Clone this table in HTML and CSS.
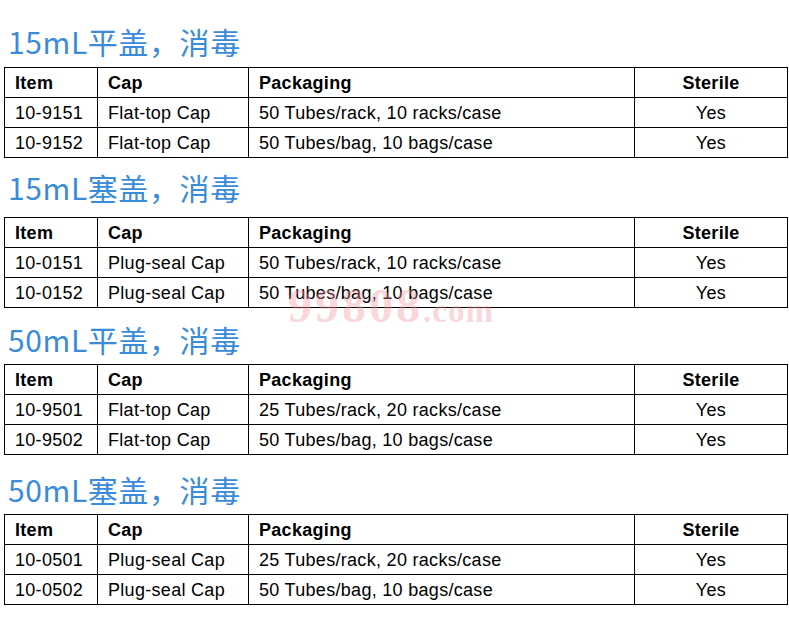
FILE: index.html
```html
<!DOCTYPE html>
<html lang="zh">
<head>
<meta charset="utf-8">
<title>Tubes</title>
<link rel="stylesheet" href="styles.css">
</head>
<body>
<div class="page">
  <section class="sec sec1">
    <h2 class="title">15mL平盖，消毒</h2>
    <table class="spec">
      <colgroup><col class="c1"><col class="c2"><col class="c3"><col class="c4"></colgroup>
      <tr class="head"><th>Item</th><th>Cap</th><th>Packaging</th><th class="ctr">Sterile</th></tr>
      <tr><td>10-9151</td><td>Flat-top Cap</td><td>50 Tubes/rack, 10 racks/case</td><td class="ctr">Yes</td></tr>
      <tr><td>10-9152</td><td>Flat-top Cap</td><td>50 Tubes/bag, 10 bags/case</td><td class="ctr">Yes</td></tr>
    </table>
  </section>
  <section class="sec sec2">
    <h2 class="title">15mL塞盖，消毒</h2>
    <table class="spec">
      <colgroup><col class="c1"><col class="c2"><col class="c3"><col class="c4"></colgroup>
      <tr class="head"><th>Item</th><th>Cap</th><th>Packaging</th><th class="ctr">Sterile</th></tr>
      <tr><td>10-0151</td><td>Plug-seal Cap</td><td>50 Tubes/rack, 10 racks/case</td><td class="ctr">Yes</td></tr>
      <tr><td>10-0152</td><td>Plug-seal Cap</td><td>50 Tubes/bag, 10 bags/case</td><td class="ctr">Yes</td></tr>
    </table>
  </section>
  <section class="sec sec3">
    <h2 class="title">50mL平盖，消毒</h2>
    <table class="spec">
      <colgroup><col class="c1"><col class="c2"><col class="c3"><col class="c4"></colgroup>
      <tr class="head"><th>Item</th><th>Cap</th><th>Packaging</th><th class="ctr">Sterile</th></tr>
      <tr><td>10-9501</td><td>Flat-top Cap</td><td>25 Tubes/rack, 20 racks/case</td><td class="ctr">Yes</td></tr>
      <tr><td>10-9502</td><td>Flat-top Cap</td><td>50 Tubes/bag, 10 bags/case</td><td class="ctr">Yes</td></tr>
    </table>
  </section>
  <section class="sec sec4">
    <h2 class="title">50mL塞盖，消毒</h2>
    <table class="spec">
      <colgroup><col class="c1"><col class="c2"><col class="c3"><col class="c4"></colgroup>
      <tr class="head"><th>Item</th><th>Cap</th><th>Packaging</th><th class="ctr">Sterile</th></tr>
      <tr><td>10-0501</td><td>Plug-seal Cap</td><td>25 Tubes/rack, 20 racks/case</td><td class="ctr">Yes</td></tr>
      <tr><td>10-0502</td><td>Plug-seal Cap</td><td>50 Tubes/bag, 10 bags/case</td><td class="ctr">Yes</td></tr>
    </table>
  </section>
  <div class="watermark"><span class="wm-big">99808</span><span class="wm-small">.com</span></div>
</div>
</body>
</html>
```

FILE: styles.css
```css
html, body {
  margin: 0;
  padding: 0;
  background: #ffffff;
}
.page {
  position: relative;
  width: 789px;
  height: 617px;
  overflow: hidden;
  padding-left: 4px;
  box-sizing: border-box;
}
.sec {
  display: flex;
  flex-direction: column;
}
.title {
  margin: 0;
  padding-left: 4px;
  font-family: "Noto Sans CJK SC", "Noto Sans", sans-serif;
  font-weight: 400;
  font-size: 30px;
  line-height: 40px;
  color: #3a8bd9;
  letter-spacing: 0.6px;
}
.sec1 .title { margin-top: 21px; margin-bottom: 6px; }
.sec2 .title { margin-top: 9px; margin-bottom: 10px; }
.sec3 .title { margin-top: 11px; margin-bottom: 5px; }
.sec4 .title { margin-top: 14px; margin-bottom: 5px; }
.spec {
  border-collapse: collapse;
  width: 783px;
  table-layout: fixed;
  font-family: "Liberation Sans", Arial, sans-serif;
  font-size: 18px;
  letter-spacing: 0.3px;
  color: #000;
}
.c1 { width: 93px; }
.c2 { width: 151px; }
.c3 { width: 386px; }
.c4 { width: 153px; }
.spec th, .spec td {
  border: 1px solid #000;
  height: 30px;
  padding: 0 0 0 10px;
  text-align: left;
  white-space: nowrap;
  line-height: 20px;
  box-sizing: border-box;
}
.spec th { font-weight: 700; }
.spec .ctr { text-align: center; padding-left: 0; }
.watermark {
  position: absolute;
  left: 288px;
  top: 282px;
  line-height: 1;
  font-family: "Liberation Serif", "Times New Roman", serif;
  font-weight: 700;
  color: rgba(242, 150, 160, 0.4);
  white-space: nowrap;
  pointer-events: none;
}
.wm-big { font-size: 48px; letter-spacing: 3px; }
.wm-small { font-size: 33px; letter-spacing: 1px; }
```
